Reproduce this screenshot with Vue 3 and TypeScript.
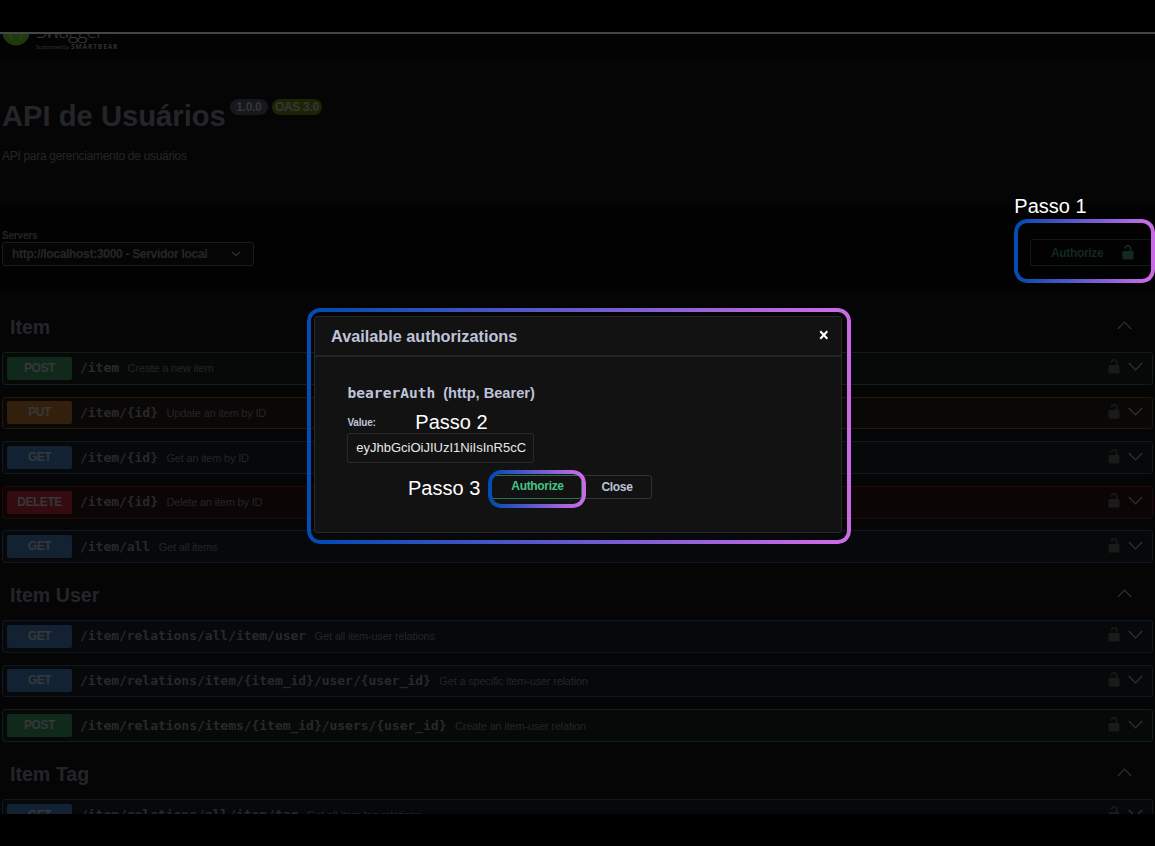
<script setup lang="ts">
interface Operation {
  method: 'post' | 'put' | 'get' | 'delete'
  path: string
  summary: string
}
interface Section {
  name: string
  operations: Operation[]
}

const sections: Section[] = [
  {
    name: 'Item',
    operations: [
      { method: 'post', path: '/item', summary: 'Create a new item' },
      { method: 'put', path: '/item/{id}', summary: 'Update an item by ID' },
      { method: 'get', path: '/item/{id}', summary: 'Get an item by ID' },
      { method: 'delete', path: '/item/{id}', summary: 'Delete an item by ID' },
      { method: 'get', path: '/item/all', summary: 'Get all items' },
    ],
  },
  {
    name: 'Item User',
    operations: [
      { method: 'get', path: '/item/relations/all/item/user', summary: 'Get all item-user relations' },
      { method: 'get', path: '/item/relations/item/{item_id}/user/{user_id}', summary: 'Get a specific item-user relation' },
      { method: 'post', path: '/item/relations/items/{item_id}/users/{user_id}', summary: 'Create an item-user relation' },
    ],
  },
  {
    name: 'Item Tag',
    operations: [
      { method: 'get', path: '/item/relations/all/item/tag', summary: 'Get all item-tag relations' },
    ],
  },
]
</script>

<template>
  <div class="screen">
    <div class="page">
      <header class="topbar">
        <svg class="logo" viewBox="0 0 28 28">
          <circle cx="14" cy="14" r="13.6" fill="#1e3a0b" />
          <path d="M10.500 7c-2 0-2 1.500-2 3.500s0 3.500-2 3.500c2 0 2 1.500 2 3.500s0 3.500 2 3.500M17.500 7c2 0 2 1.500 2 3.500s0 3.500 2 3.500c-2 0-2 1.500-2 3.500s0 3.500-2 3.500" fill="none" stroke="#2d3d27" stroke-width="1.600" />
        </svg>
        <div class="brand">
          <div class="brand-name">Swagger<span>.</span></div>
          <div class="brand-by"><span>Supported by</span><b>SMARTBEAR</b></div>
        </div>
      </header>

      <section class="info">
        <div class="title-line">
          <h1>API de Usuários</h1>
          <span class="badge version">1.0.0</span>
          <span class="badge oas">OAS 3.0</span>
        </div>
        <p>API para gerenciamento de usuários</p>
      </section>

      <section class="servers">
        <div>
          <div class="servers-label">Servers</div>
          <div class="select">
            <span>http://localhost:3000 - Servidor local</span>
            <svg width="10" height="6" viewBox="0 0 10 6"><path d="M1.200 1l3.800 3.600L8.800 1" fill="none" stroke="#303134" stroke-width="1.300" /></svg>
          </div>
        </div>
        <div class="authorize-open">
          <span>Authorize</span>
          <svg width="12" height="15" viewBox="0 0 12 15"><path d="M2.900 3.500C3.200 1.600 4.300.8 5.700.8 7.600.8 8.600 2 8.600 3.800V6.500" fill="none" stroke="#12291f" stroke-width="1.700" /><rect x="0.300" y="6" width="11.400" height="8.600" rx="1.400" fill="#12291f" /></svg>
        </div>
      </section>

      <main class="sections">
        <section v-for="section in sections" :key="section.name">
          <div class="section-head">
            <h2>{{ section.name }}</h2>
            <svg width="15" height="9" viewBox="0 0 15 9"><path d="M.8 8L7.500 1.200 14.200 8" fill="none" stroke="#303030" stroke-width="1.200" /></svg>
          </div>
          <div v-for="op in section.operations" :key="op.method + op.path" class="op" :class="op.method">
            <span class="method">{{ op.method.toUpperCase() }}</span>
            <span class="path">{{ op.path }}</span>
            <span class="summary">{{ op.summary }}</span>
            <svg class="lock" width="12" height="15" viewBox="0 0 12 15"><path d="M3.500 3.500C3.700 1.600 4.600.8 6 .8 7.800.8 8.700 1.900 8.700 3.600V6.500" fill="none" stroke="#191a1a" stroke-width="1.600" /><rect x="0.500" y="6" width="11" height="8.600" rx="1.400" fill="#191a1a" /></svg>
            <svg class="arrow" width="15" height="9" viewBox="0 0 15 9"><path d="M.8 1L7.500 7.800 14.200 1" fill="none" stroke="#313232" stroke-width="1.200" /></svg>
          </div>
        </section>
      </main>
    </div>

    <div class="ring ring-one"></div>
    <div class="step step-one">Passo 1</div>

    <div class="ring ring-modal"></div>
    <div class="modal">
      <div class="modal-head">
        <h3>Available authorizations</h3>
        <svg width="10" height="10" viewBox="0 0 10 10"><path d="M1.300 1.200L8.300 8.800M8.300 1.200L1.300 8.800" stroke="#fff" stroke-width="2.100" fill="none" /></svg>
      </div>
      <div class="modal-body">
        <h4><code>bearerAuth</code><span>(http, Bearer)</span></h4>
        <label>Value:</label>
        <div class="field">eyJhbGciOiJIUzI1NiIsInR5cC</div>
        <div class="buttons">
          <span class="btn confirm">Authorize</span>
          <span class="btn">Close</span>
        </div>
      </div>
    </div>
    <div class="step step-two">Passo 2</div>
    <div class="ring ring-three"></div>
    <div class="step step-three">Passo 3</div>
  </div>
</template>

<style>
body {
  background: #000;
}
</style>

<style scoped>
* {
  box-sizing: border-box;
}
h1, h2, h3, h4, p {
  margin: 0;
}
svg {
  display: block;
  flex: none;
}
.screen {
  position: relative;
  width: 1155px;
  height: 846px;
  padding-top: 32px;
  overflow: hidden;
  background: #000;
  font-family: "Liberation Sans", Arial, sans-serif;
  white-space: nowrap;
}
.page {
  height: 782px;
  overflow: hidden;
  border-top: 2px solid #464646;
  background: #050505;
}
.topbar {
  display: flex;
  height: 24px;
  padding-left: 2px;
  background: #030303;
}
.logo {
  width: 28px;
  height: 28px;
  margin-top: -16px;
}
.brand {
  margin: -15px 0 0 6px;
}
.brand-name {
  height: 23px;
  font: 20px/23px "Open Sans", sans-serif;
  font-weight: 300;
  letter-spacing: -1.300px;
  color: #3a3a3a;
}
.brand-name span {
  margin-left: 3px;
  font-size: 10px;
}
.brand-by {
  display: flex;
  gap: 3px;
  font: 6px/10px "Open Sans", sans-serif;
  color: #303030;
}
.brand-by span {
  width: 32px;
  letter-spacing: -0.420px;
}
.brand-by b {
  font-size: 6.600px;
  letter-spacing: 0.860px;
}
.info {
  height: 146px;
  padding: 37px 2px 0;
}
.title-line {
  display: flex;
  align-items: flex-start;
}
h1 {
  margin-right: 4px;
  font-size: 29.200px;
  line-height: 42px;
  color: #242529;
}
.badge {
  height: 16px;
  margin: 4px 4px 0 0;
  border-radius: 8px;
  font-size: 12px;
  letter-spacing: -0.300px;
  font-weight: bold;
  line-height: 16px;
  text-align: center;
  color: #34363a;
}
.version {
  width: 38px;
  background: #16181b;
}
.oas {
  width: 50px;
  background: #1c2503;
}
.info p {
  margin-top: 11px;
  font-size: 12px;
  letter-spacing: -0.300px;
  line-height: 16px;
  color: #242529;
}
.servers {
  display: flex;
  justify-content: space-between;
  height: 87px;
  padding: 25px 0 0 2px;
  background: #020202;
}
.servers-label {
  height: 13px;
  font-size: 10px;
  letter-spacing: -0.200px;
  font-weight: bold;
  line-height: 13px;
  color: #242529;
}
.select {
  display: flex;
  align-items: center;
  justify-content: space-between;
  width: 252px;
  height: 24px;
  padding: 0 12px 0 9px;
  border: 1px solid #1c1c1c;
  border-radius: 3px;
  background: #050505;
  font-size: 12px;
  letter-spacing: -0.300px;
  font-weight: bold;
  color: #26272a;
}
.authorize-open {
  display: flex;
  align-items: center;
  width: 125px;
  height: 27px;
  margin-top: 10px;
  padding-left: 20px;
  border: 1px solid #0b1c15;
  border-right: 0;
  border-radius: 3px 0 0 3px;
  font-size: 12px;
  letter-spacing: -0.330px;
  font-weight: bold;
  color: #12291f;
}
.authorize-open span {
  width: 71px;
}
.sections {
  padding: 16px 2px 0;
}
.section-head {
  display: flex;
  align-items: flex-start;
  justify-content: space-between;
  height: 45px;
  padding: 9px 21px 0 8px;
}
.section-head h2 {
  font-size: 19.600px;
  line-height: 22px;
  color: #242529;
}
.section-head svg {
  margin-top: 5px;
}
.op {
  display: flex;
  align-items: center;
  height: 32.800px;
  margin-bottom: 11.800px;
  padding: 0 9px 0 4px;
  border: 1px solid;
  border-radius: 3px;
}
.post { background: #060908; border-color: #0b211a; }
.put { background: #0a0806; border-color: #241707; }
.get { background: #06080a; border-color: #0c1a27; }
.delete { background: #0b0505; border-color: #270809; }
.method {
  width: 65px;
  height: 23px;
  margin-right: 8px;
  border-radius: 2px;
  font-size: 12px;
  letter-spacing: -0.450px;
  font-weight: bold;
  line-height: 23px;
  text-align: center;
  color: #363839;
}
.post .method { background: #10291b; }
.put .method { background: #33200c; }
.get .method { background: #132233; }
.delete .method { background: #340c0f; }
.path {
  margin-right: 8.500px;
  font: bold 13px/16px "DejaVu Sans Mono", monospace;
  letter-spacing: -0.030px;
  color: #28292c;
}
.summary {
  font-size: 11px;
  letter-spacing: -0.190px;
  color: #242529;
}
.lock {
  margin: -3px 8px 0 auto;
}
.arrow {
  margin-top: -3px;
}
.ring {
  position: absolute;
  border: 4px solid transparent;
  border-radius: 13px;
  background: linear-gradient(90deg, #054bb4 4%, #cb6ae7 96%) border-box;
  mask: linear-gradient(#000 0 0) padding-box exclude, linear-gradient(#000 0 0) border-box;
}
.ring-one {
  left: 1014px;
  top: 219px;
  width: 141px;
  height: 64px;
}
.ring-modal {
  left: 307px;
  top: 307.500px;
  width: 543.500px;
  height: 236px;
}
.ring-three {
  left: 488px;
  top: 469.500px;
  width: 98px;
  height: 38.500px;
}
.step {
  position: absolute;
  font-size: 20px;
  line-height: 24px;
  color: #fff;
}
.step-one { left: 1014.300px; top: 194px; }
.step-two { left: 415.300px; top: 410px; }
.step-three { left: 408px; top: 476px; }
.modal {
  position: absolute;
  left: 314px;
  top: 316px;
  width: 528px;
  height: 217px;
  border: 1px solid #292929;
  border-radius: 3px;
  background: #121212;
  color: #bfc3d9;
}
.modal-head {
  display: flex;
  align-items: center;
  justify-content: space-between;
  height: 40px;
  padding: 0 12px 0 16px;
  border-bottom: 2px solid #242424;
}
h3 {
  font-size: 16.250px;
  line-height: 20px;
}
.modal-head svg {
  margin-top: -3px;
}
.modal-body {
  padding: 25px 32px 0;
}
h4 {
  display: flex;
  align-items: center;
  gap: 8px;
  height: 22px;
  padding-left: 0.600px;
  font-size: 14.600px;
}
h4 code {
  font: bold 14.550px/18px "DejaVu Sans Mono", monospace;
}
label {
  display: block;
  margin-top: 13px;
  padding-left: 0.400px;
  font-size: 10px;
  letter-spacing: -0.200px;
  font-weight: bold;
  line-height: 12px;
}
.field {
  width: 187px;
  height: 30px;
  margin-top: 4px;
  padding-left: 8.300px;
  border: 1px solid #292929;
  border-radius: 3px;
  font-size: 13px;
  line-height: 27px;
  color: #e8e8e8;
}
.buttons {
  display: flex;
  margin: 12px 0 0 144px;
}
.btn {
  width: 70px;
  height: 24px;
  border: 1px solid #333;
  border-radius: 3px;
  font-size: 12px;
  letter-spacing: -0.330px;
  font-weight: bold;
  line-height: 22px;
  text-align: center;
}
.confirm {
  width: 91px;
  margin-right: 0;
  padding-left: 2px;
  border-color: #23744c;
  line-height: 21px;
  color: #43c586;
}
</style>
